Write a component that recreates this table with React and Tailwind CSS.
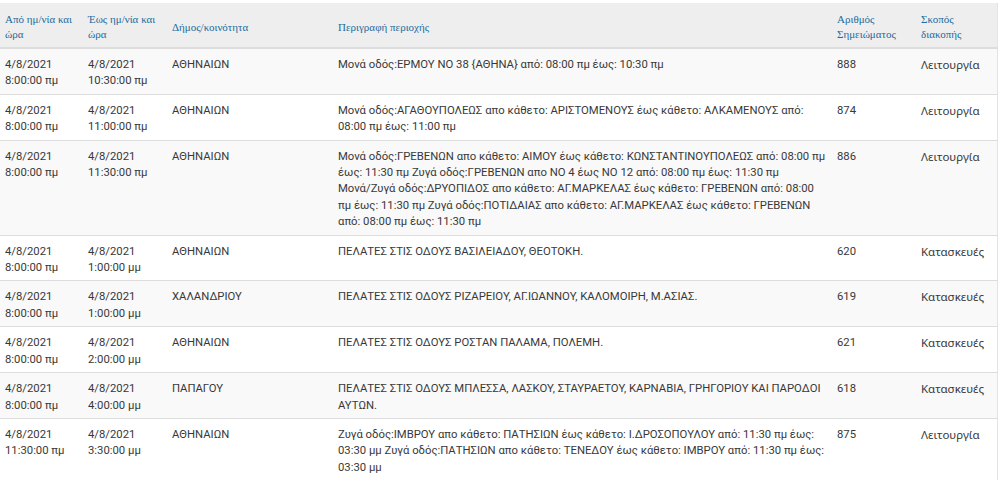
import React from "react";

// Column widths taken from the header layout
const columns = [
  { label: ["Από ημ/νία και", "ώρα"], width: "w-[83px]" },
  { label: ["Έως ημ/νία και", "ώρα"], width: "w-[84px]" },
  { label: ["Δήμος/κοινότητα"], width: "w-[166px]" },
  { label: ["Περιγραφή περιοχής"], width: "w-[499px]" },
  { label: ["Αριθμός", "Σημειώματος"], width: "w-[84px]" },
  { label: ["Σκοπός", "διακοπής"], width: "w-[81px]" },
];

const rows = [
  {
    from: ["4/8/2021", "8:00:00 πμ"],
    to: ["4/8/2021", "10:30:00 πμ"],
    area: "ΑΘΗΝΑΙΩΝ",
    desc: "Μονά οδός:ΕΡΜΟΥ ΝΟ 38 {ΑΘΗΝΑ} από: 08:00 πμ έως: 10:30 πμ",
    num: "888",
    reason: "Λειτουργία",
  },
  {
    from: ["4/8/2021", "8:00:00 πμ"],
    to: ["4/8/2021", "11:00:00 πμ"],
    area: "ΑΘΗΝΑΙΩΝ",
    desc: "Μονά οδός:ΑΓΑΘΟΥΠΟΛΕΩΣ απο κάθετο: ΑΡΙΣΤΟΜΕΝΟΥΣ έως κάθετο: ΑΛΚΑΜΕΝΟΥΣ από: 08:00 πμ έως: 11:00 πμ",
    num: "874",
    reason: "Λειτουργία",
  },
  {
    from: ["4/8/2021", "8:00:00 πμ"],
    to: ["4/8/2021", "11:30:00 πμ"],
    area: "ΑΘΗΝΑΙΩΝ",
    desc: (
      <>
        Μονά οδός:ΓΡΕΒΕΝΩΝ απο κάθετο: ΑΙΜΟΥ έως κάθετο: ΚΩΝΣΤΑΝΤΙΝΟΥΠΟΛΕΩΣ από: 08:00 πμ έως: 11:30 πμ Ζυγά
        οδός:ΓΡΕΒΕΝΩΝ απο ΝΟ 4 έως ΝΟ 12 από: 08:00 πμ έως: 11:30 πμ{" "}
        <span className="whitespace-nowrap">Μονά/Ζυγά</span> οδός:ΔΡΥΟΠΙΔΟΣ απο κάθετο: ΑΓ.ΜΑΡΚΕΛΑΣ έως κάθετο:
        ΓΡΕΒΕΝΩΝ από: 08:00 πμ έως: 11:30 πμ Ζυγά οδός:ΠΟΤΙΔΑΙΑΣ απο κάθετο: ΑΓ.ΜΑΡΚΕΛΑΣ έως κάθετο: ΓΡΕΒΕΝΩΝ
        από: 08:00 πμ έως: 11:30 πμ
      </>
    ),
    num: "886",
    reason: "Λειτουργία",
  },
  {
    from: ["4/8/2021", "8:00:00 πμ"],
    to: ["4/8/2021", "1:00:00 μμ"],
    area: "ΑΘΗΝΑΙΩΝ",
    desc: "ΠΕΛΑΤΕΣ ΣΤΙΣ ΟΔΟΥΣ ΒΑΣΙΛΕΙΑΔΟΥ, ΘΕΟΤΟΚΗ.",
    num: "620",
    reason: "Κατασκευές",
  },
  {
    from: ["4/8/2021", "8:00:00 πμ"],
    to: ["4/8/2021", "1:00:00 μμ"],
    area: "ΧΑΛΑΝΔΡΙΟΥ",
    desc: "ΠΕΛΑΤΕΣ ΣΤΙΣ ΟΔΟΥΣ ΡΙΖΑΡΕΙΟΥ, ΑΓ.ΙΩΑΝΝΟΥ, ΚΑΛΟΜΟΙΡΗ, Μ.ΑΣΙΑΣ.",
    num: "619",
    reason: "Κατασκευές",
  },
  {
    from: ["4/8/2021", "8:00:00 πμ"],
    to: ["4/8/2021", "2:00:00 μμ"],
    area: "ΑΘΗΝΑΙΩΝ",
    desc: "ΠΕΛΑΤΕΣ ΣΤΙΣ ΟΔΟΥΣ ΡΟΣΤΑΝ ΠΑΛΑΜΑ, ΠΟΛΕΜΗ.",
    num: "621",
    reason: "Κατασκευές",
  },
  {
    from: ["4/8/2021", "8:00:00 πμ"],
    to: ["4/8/2021", "4:00:00 μμ"],
    area: "ΠΑΠΑΓΟΥ",
    desc: "ΠΕΛΑΤΕΣ ΣΤΙΣ ΟΔΟΥΣ ΜΠΛΕΣΣΑ, ΛΑΣΚΟΥ, ΣΤΑΥΡΑΕΤΟΥ, ΚΑΡΝΑΒΙΑ, ΓΡΗΓΟΡΙΟΥ ΚΑΙ ΠΑΡΟΔΟΙ ΑΥΤΩΝ.",
    num: "618",
    reason: "Κατασκευές",
  },
  {
    from: ["4/8/2021", "11:30:00 πμ"],
    to: ["4/8/2021", "3:30:00 μμ"],
    area: "ΑΘΗΝΑΙΩΝ",
    desc: "Ζυγά οδός:ΙΜΒΡΟΥ απο κάθετο: ΠΑΤΗΣΙΩΝ έως κάθετο: Ι.ΔΡΟΣΟΠΟΥΛΟΥ από: 11:30 πμ έως: 03:30 μμ Ζυγά οδός:ΠΑΤΗΣΙΩΝ απο κάθετο: ΤΕΝΕΔΟΥ έως κάθετο: ΙΜΒΡΟΥ από: 11:30 πμ έως: 03:30 μμ",
    num: "875",
    reason: "Λειτουργία",
  },
];

const Lines = ({ lines }) =>
  lines.map((l, i) => (
    <React.Fragment key={i}>
      {i > 0 && <br />}
      {l}
    </React.Fragment>
  ));

const cell = "px-[5px] pt-[8px] pb-[4px] align-top";

export default function App() {
  return (
    <div className="bg-white pt-[3px] w-[1000px]">
      <table className="table-fixed w-[997px] border-collapse border-r border-[#e4e4e4] text-left">
        <colgroup>
          {columns.map((c, i) => (
            <col key={i} className={c.width} />
          ))}
        </colgroup>
        <thead>
          <tr className="bg-[#eeeeee] border-b-2 border-[#dddddd]">
            {columns.map((c, i) => (
              <th
                key={i}
                className="h-[45px] px-[5px] pt-[4px] pb-0 align-middle font-normal text-[11px] leading-[15px] text-[#236a9c] font-['Liberation_Serif',serif]"
              >
                <Lines lines={c.label} />
              </th>
            ))}
          </tr>
        </thead>
        <tbody className="font-['Roboto',sans-serif] text-[11.3px] leading-[16.4px] text-[#383838]">
          {rows.map((r, i) => (
            <tr
              key={i}
              className={`border-t border-[#dddddd] ${i % 2 === 0 ? "bg-[#f9f9f9]" : "bg-white"}`}
            >
              <td className={cell}>
                <Lines lines={r.from} />
              </td>
              <td className={cell}>
                <Lines lines={r.to} />
              </td>
              <td className={cell}>{r.area}</td>
              <td className={cell}>{r.desc}</td>
              <td className={cell}>{r.num}</td>
              <td className={`${cell} font-['Noto_Sans',sans-serif] text-[11.5px]`}>{r.reason}</td>
            </tr>
          ))}
        </tbody>
      </table>
    </div>
  );
}
